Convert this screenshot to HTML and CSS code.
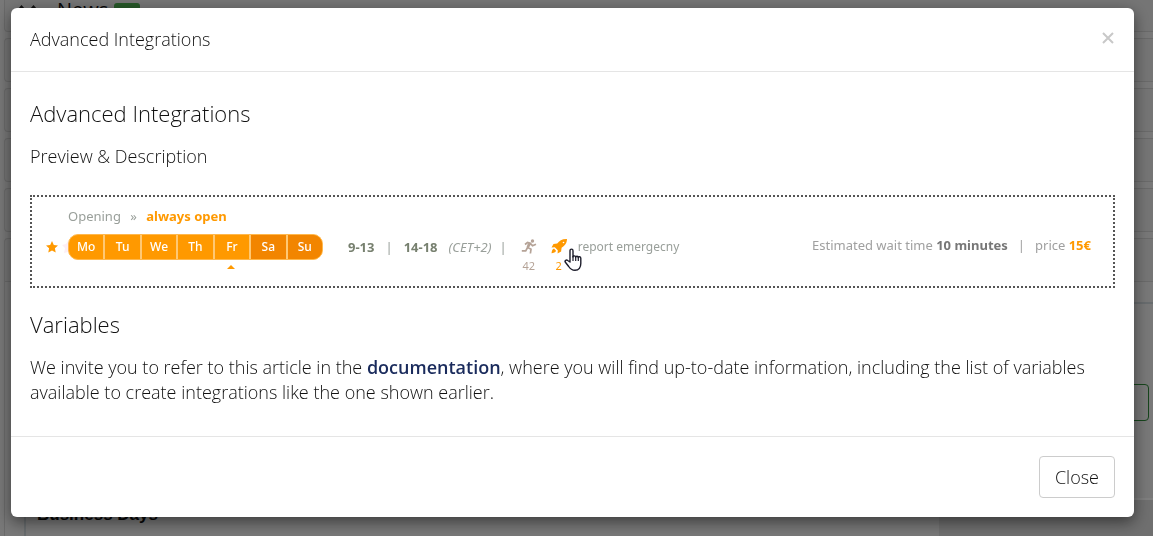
FILE: index.html
```
<!DOCTYPE html>
<html lang="en">

<head>
    <meta charset="UTF-8">
    <meta name="viewport" content="width=device-width, initial-scale=1.0">
    <title>Advanced Integrations</title>
    <link rel="stylesheet" href="styles.css">
</head>

<body>

    <!-- Page behind the modal -->
    <div class="page">
        <div class="panel panel-first">
            <svg class="handle" width="20" height="20" viewBox="0 0 20 20"><path fill="#222" d="M0 9l3.500-4L7 9v8H0zM12 9l3.500-4L19 9v8h-7z"/></svg>
            <span>News</span>
            <span class="badge"></span>
        </div>
        <div class="panel"></div>
        <div class="panel"></div>
        <div class="panel"></div>
        <div class="panel"></div>
        <div class="panel panel-open"></div>
        <div class="panel-body">
            <div class="settings">
                <div class="settings-top">
                    <button type="button" class="btn-save" aria-label="Save"></button>
                </div>
                <div class="settings-row">
                    <div class="settings-name">Business Days</div>
                    <div class="settings-value"></div>
                </div>
            </div>
        </div>
    </div>

    <div class="backdrop">
        <div class="modal" role="dialog" aria-labelledby="modalTitle">
            <div class="modal-header">
                <h4 id="modalTitle">Advanced Integrations</h4>
                <button type="button" class="close" aria-label="Close dialog">
                    <svg width="12" height="12" viewBox="0 0 12 12"><path d="M1 1l10 10M11 1L1 11" stroke="#c8c8c8" stroke-width="2" fill="none"/></svg>
                </button>
            </div>

            <div class="modal-body">
                <h3>Advanced Integrations</h3>
                <p>Preview &amp; Description</p>

                <div class="preview">
                    <div class="opening">Opening <span class="arrows">»</span> <strong>always open</strong></div>
                    <div class="schedule">
                        <svg class="star" width="12" height="26" viewBox="0 0 12 26"><path fill="#ff9900" d="M6 7l1.800 3.900 4.200.5-3.100 2.900.8 4.200L6 16.400l-3.700 2.100.8-4.200L0 11.400l4.200-.5z"/></svg>
                        <svg class="star-faint" width="6" height="26" viewBox="0 0 6 26"><path fill="#fdeef4" d="M6 7v11l-4 1 1-5-3-3 4-1z"/></svg>
                        <ul class="days">
                            <li>Mo</li>
                            <li>Tu</li>
                            <li>We</li>
                            <li>Th</li>
                            <li class="today">Fr</li>
                            <li class="weekend">Sa</li>
                            <li class="weekend">Su</li>
                        </ul>
                        <div class="hours">
                            <strong>9-13</strong>
                            <span>|</span>
                            <strong>14-18</strong>
                            <em>(CET+2)</em>
                        </div>
                        <span class="divider">|</span>
                        <div class="stat">
                            <svg width="16" height="26" viewBox="0 0 16 26">
                                <circle cx="11.500" cy="7" r="1.700" fill="#b5a397"/>
                                <path d="M4 10.500l2.500-2 3 .8-2.700 4.200 3.200 1.700-.6 4.300M9.300 9.500l2.200 2.200 3.500-1.500M6.300 14l-1.600 2.800H.8" fill="none" stroke="#b5a397" stroke-width="1.700"/>
                                <path d="M7 9l3 .8-2.500 4.200-2-.8z" fill="#b5a397"/>
                            </svg>
                            <span>42</span>
                        </div>
                        <div class="stat stat-active">
                            <svg width="16" height="26" viewBox="0 0 16 26">
                                <path fill="#ff9900" d="M16 5c-5-.2-7.500 1.700-9.800 4.500L2.500 10 .5 13.500l3.300-.2 3 3-.2 3.200 3.500-2 .5-3.700C14 11.500 16 9 16 5z"/>
                                <path fill="#ff9900" d="M3 14.500c-2 .5-2 2.500-2.500 4.700 2-.4 4-.5 4.500-2.500z"/>
                                <circle cx="12.500" cy="8.500" r=".8" fill="#fff"/>
                            </svg>
                            <span>2</span>
                            <svg class="pointer" width="18" height="24" viewBox="0 0 18 24">
                                <path fill="#fff" stroke="#1d1d2b" stroke-width="1.400" stroke-linejoin="round" d="M6 14V2.800C6 .6 9 .6 9 2.800V9c0-1.500 2.600-1.500 2.700.3 0-1.600 2.500-1.400 2.600.3.200-1.400 2.500-1.200 2.500.6v5.300c0 3.500-1.800 6.800-5.800 6.800-3.500 0-4.800-1.300-6.300-3.800L1.200 14c-.7-1.300 1.200-2.700 2.500-1.500z"/>
                                <path stroke="#1d1d2b" stroke-width="1.200" d="M9 8v5M11.700 9v4M14.300 9.500V13"/>
                            </svg>
                        </div>
                        <span class="report">report emergecny</span>
                        <div class="estimate">
                            <span>Estimated wait time <strong>10 minutes</strong></span>
                            <span>|</span>
                            <span>price <strong class="price">15€</strong></span>
                        </div>
                    </div>
                </div>

                <h3>Variables</h3>
                <p>We invite you to refer to this article in the <a href="#">documentation</a>, where you will find up-to-date information, including the list of variables available to create integrations like the one shown earlier.</p>
            </div>

            <div class="modal-footer">
                <button type="button" class="btn">Close</button>
            </div>
        </div>
    </div>

</body>

</html>
```

FILE: styles.css
```
* {
    box-sizing: border-box;
}

body {
    font-family: "Open Sans", sans-serif;
    font-size: 18px;
    font-weight: 300;
    line-height: 25px;
    color: #111;
    margin: 0;
    background-color: #f0f0f0;
}

/* Page behind the modal */
.page {
    height: 100vh;
    overflow: hidden;
    padding-left: 4px;
    display: flex;
    flex-direction: column;
}

.panel {
    flex: none;
    height: 44px;
    margin-bottom: 6px;
    border: 1px solid #d4d4d4;
    border-right: none;
    border-radius: 4px 0 0 4px;
    background-color: #eaeaea;
}

.panel-first {
    height: 32px;
    border-top: none;
    border-radius: 0 0 0 4px;
    display: flex;
    gap: 6px;
    padding-left: 13px;
    font-size: 20px;
    line-height: 20px;
    font-weight: 400;
}

.handle {
    margin-right: 13px;
}

.badge {
    width: 26px;
    height: 18px;
    margin-top: 3px;
    border-radius: 3px;
    background-color: #4caf50;
}

.panel-open {
    margin-bottom: 0;
    border-radius: 4px 0 0 0;
}

.panel-body {
    flex: 1;
    padding: 20px 0 0 19px;
    border-left: 1px solid #d4d4d4;
}

.settings {
    height: 100%;
    border-top: 2px solid #d0d8dc;
    border-left: 2px solid #d0d8dc;
}

.settings-top {
    height: 194px;
    padding: 80px 4px 0 0;
    text-align: right;
}

.btn-save {
    width: 100px;
    height: 37px;
    border: 1px solid #2e8b3a;
    border-radius: 4px;
    background: none;
}

.settings-row {
    height: 100%;
    border-top: 2px solid #fff;
    display: flex;
    font-family: "Liberation Sans", sans-serif;
    font-size: 17px;
    font-weight: 700;
}

.settings-name {
    flex: 0 0 81%;
    padding: 2px 0 0 11px;
}

.settings-value {
    flex: 1;
    background-color: #dedede;
}

/* Modal */
.backdrop {
    position: fixed;
    inset: 0;
    padding: 8px 19px 0 11px;
    background-color: rgba(0, 0, 0, 0.5);
}

.modal {
    background-color: #fff;
    border-radius: 6px;
    box-shadow: 0 5px 15px rgba(0, 0, 0, 0.5);
}

.modal-header {
    display: flex;
    align-items: center;
    justify-content: space-between;
    padding: 19px;
    border-bottom: 1px solid #e5e5e5;
}

h3,
h4,
p {
    margin: 0;
    font-weight: 300;
}

h4 {
    font-size: 18px;
}

h3 {
    font-size: 22px;
    line-height: 24px;
    margin-bottom: 19px;
}

.close {
    display: flex;
    padding: 0 1px 3px 0;
    border: none;
    background: none;
    cursor: pointer;
}

.modal-body {
    padding: 29px 19px 31px;
}

.modal-body a {
    color: #1a2b5c;
    font-weight: 600;
    text-decoration: none;
}

.preview {
    height: 93px;
    margin: 26px 0 24px;
    padding: 9px 22px 0 14px;
    border: 2px dotted #555;
    font-family: "Noto Sans", sans-serif;
    font-size: 13px;
    font-weight: 400;
    color: #999f9a;
}

.opening {
    padding-left: 22px;
    line-height: 20px;
    margin-bottom: 8px;
}

.opening strong {
    color: #ff9900;
}

.arrows {
    margin: 0 6px;
}

.schedule {
    display: flex;
    align-items: flex-start;
    line-height: 26px;
    white-space: nowrap;
}

.star-faint {
    margin-left: 4px;
}

.days {
    display: flex;
    width: 255px;
    height: 26px;
    margin: 0 25px 0 0;
    padding: 0;
    list-style: none;
    border: 1px solid #ffb84d;
    border-radius: 10px;
    background-color: #ff9900;
    color: #fff;
    font-size: 12px;
    font-weight: 500;
    line-height: 24px;
    text-align: center;
}

.days li {
    flex: 1;
    position: relative;
}

.days li + li {
    border-left: 2px solid #ffc873;
}

.days .weekend {
    background-color: #f28500;
}

.days li:last-child {
    border-radius: 0 9px 9px 0;
}

.today::after {
    content: "";
    position: absolute;
    top: 30px;
    left: 12px;
    border: 4px solid transparent;
    border-top: none;
    border-bottom-color: #ff9900;
}

.hours {
    display: flex;
    gap: 11px;
}

.hours strong {
    color: #77806f;
}

.divider {
    margin: 0 14px 0 8px;
}

.stat {
    position: relative;
    display: flex;
    flex-direction: column;
    align-items: center;
    width: 16px;
    margin-right: 14px;
    font-size: 11px;
    line-height: 11px;
    color: #b5a397;
}

.stat-active {
    margin-right: 11px;
    color: #ff9900;
}

.pointer {
    position: absolute;
    top: 14px;
    left: 13px;
}

.report {
    font-size: 12px;
}

.estimate {
    display: flex;
    gap: 10px;
    margin-left: auto;
    line-height: 22px;
    color: #a0a0a0;
}

.estimate strong {
    color: #777;
}

.estimate .price {
    color: #ff9900;
}

.modal-footer {
    display: flex;
    justify-content: flex-end;
    padding: 19px;
    border-top: 1px solid #e5e5e5;
}

.btn {
    padding: 7px 15px;
    height: 42px;
    border: 1px solid #ccc;
    border-radius: 4px;
    background-color: #fff;
    color: #111;
    font: inherit;
    cursor: pointer;
}
```
